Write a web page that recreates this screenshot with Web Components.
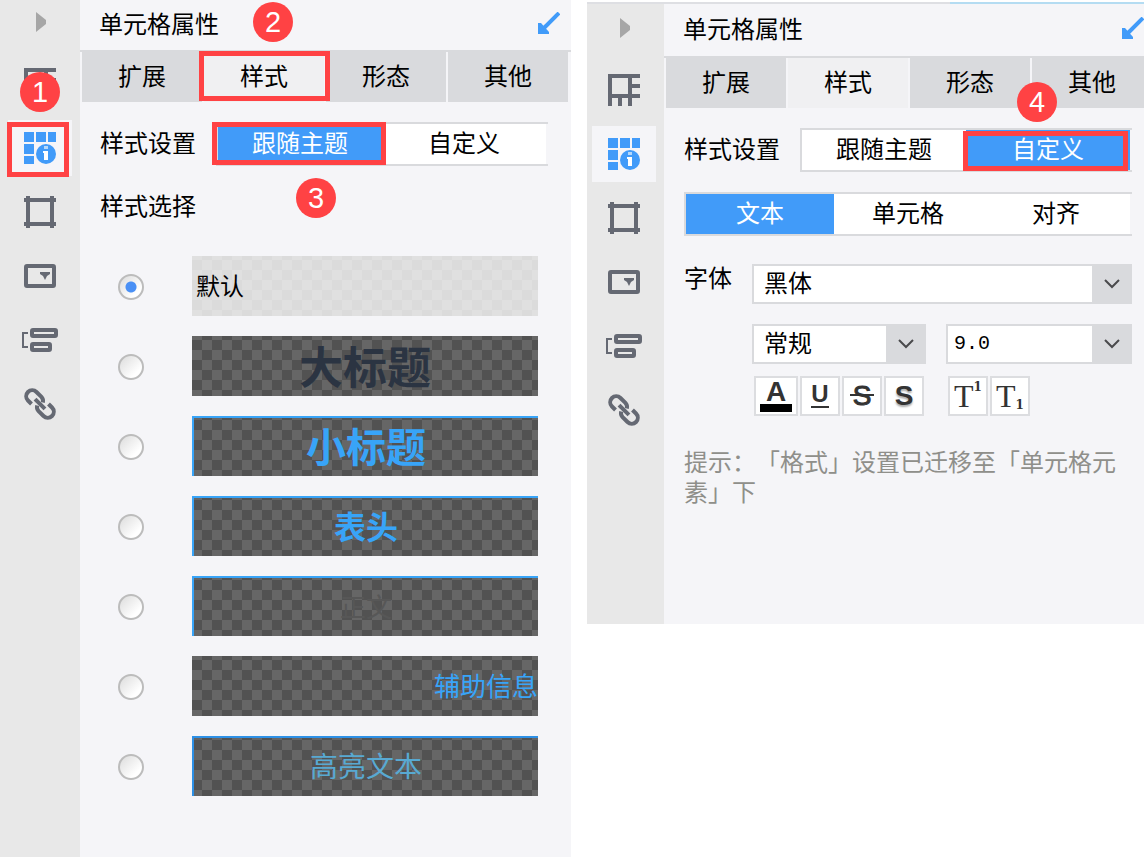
<!DOCTYPE html>
<html lang="zh-CN">
<head>
<meta charset="utf-8">
<title>单元格属性</title>
<style>
  body {
    margin: 0;
    background: #fff;
    color: #000;
    font: 24px/30px "Liberation Sans", "Noto Sans CJK SC", sans-serif;
    text-spacing-trim: space-all;
  }
  main {
    display: grid;
    grid-template-columns: 571fr 557fr;
    gap: 16px;
    align-items: start;
    overflow: hidden;
  }
  .theme {
    min-height: 100vh;
  }
  .custom {
    margin-top: 2px;
    padding-bottom: 116px;
    --rail-width: 77px;
    --rail-padding: 2px 8px 0 5px;
    --header-height: 52px;
    --arrow-margin: 0px;
    --body-padding: 20px 12px 0 20px;
    --line: 2px solid;
  }
  .stack {
    display: grid;
    gap: 20px;
  }
  .pair {
    display: grid;
    grid-template-columns: 174fr 186fr;
    gap: 20px;
  }
  .tools {
    display: flex;
    gap: 2px;
    margin-top: -8px;
    padding-left: 2px;
  }
  .tools tool-button:nth-child(5) {
    margin-left: 22px;
  }
  .font-row {
    margin-top: 8px;
  }
  .hint {
    margin: 12px 0 0;
    color: #8f8f8a;
  }
</style>
</head>
<body>
<main>
  <property-panel class="theme" heading="单元格属性">
    <setting-row label="样式设置">
      <segment-switch options="跟随主题,自定义" selected="0"></segment-switch>
    </setting-row>
    <style-list></style-list>
    <mark-frame slot="marks" style="left: 7px; top: 122px; width: 62px; height: 55px"></mark-frame>
    <mark-frame slot="marks" style="left: 199px; top: 51px; width: 131px; height: 50px"></mark-frame>
    <mark-frame slot="marks" style="left: 212px; top: 122px; width: 174px; height: 43px"></mark-frame>
    <mark-badge slot="marks" style="left: 20px; top: 72px">1</mark-badge>
    <mark-badge slot="marks" style="left: 253px; top: 2px">2</mark-badge>
    <mark-badge slot="marks" style="left: 296px; top: 178px">3</mark-badge>
  </property-panel>

  <property-panel class="custom" heading="单元格属性">
    <div class="stack">
      <setting-row label="样式设置">
        <segment-switch options="跟随主题,自定义" selected="1"></segment-switch>
      </setting-row>
      <segment-switch options="文本,单元格,对齐" selected="0"></segment-switch>
      <setting-row class="font-row" label="字体" top>
        <div class="stack">
          <combo-box label="字体" value="黑体"></combo-box>
          <div class="pair">
            <combo-box label="字形" value="常规"></combo-box>
            <combo-box class="size" label="字号" value="9.0"></combo-box>
          </div>
          <div class="tools">
            <tool-button icon="color" label="字体颜色"></tool-button>
            <tool-button icon="underline" label="下划线"></tool-button>
            <tool-button icon="strike" label="删除线"></tool-button>
            <tool-button icon="shadow" label="阴影"></tool-button>
            <tool-button icon="sup" label="上标"></tool-button>
            <tool-button icon="sub" label="下标"></tool-button>
          </div>
        </div>
      </setting-row>
      <p class="hint">提示：「格式」设置已迁移至「单元格元素」下</p>
    </div>
    <mark-frame slot="marks" style="left: 376px; top: 127px; width: 165px; height: 40px"></mark-frame>
    <mark-badge slot="marks" style="left: 430px; top: 78px">4</mark-badge>
  </property-panel>
</main>

<script>
/* ------------SIDE RAIL----------- */

const railIcons = [
  ['单元格元素', '<path d="M0 0h32v4H0zM0 0h4v32H0zM20 0h4v32h-4zM0 20h32v4H0zM24 10h8v4h-8zM10 24h4v8h-4z"/>'],
  ['单元格属性', '<path d="M0 0h10v10H0zM12 0h10v10H12zM24 0h8v10h-8zM0 12h10v10H0zM0 24h10v8H0z"/><circle cx="22" cy="22" r="10"/><path fill="#b5d8fb" d="M20 14h4v3h-4z"/><path fill="#fff" d="M19 19h5v9h-4v-7h-1z"/>'],
  ['悬浮元素', '<path d="M2 0h4v32H2zM26 0h4v32h-4zM0 2h32v4H0zM0 26h32v4H0z"/>'],
  ['控件设置', '<rect x="2" y="6" width="28" height="20" rx="1" fill="none" stroke="currentColor" stroke-width="4"/><path d="M16 12h10v2l-3 2-2 4-2-4-3-2z"/>'],
  ['条件属性', '<path d="M4 9H-1v14h5" fill="none" stroke="currentColor" stroke-width="2"/><g fill="none" stroke="currentColor" stroke-width="4"><rect x="8" y="6" width="24" height="6" rx="1"/><rect x="8" y="20" width="18" height="6" rx="1"/></g>'],
  ['超级链接', '<g fill="none" stroke="currentColor" stroke-width="4" transform="rotate(45 16 16)"><path d="M10 22H5a6 6 0 0 1 0-12h7a6 6 0 0 1 5 3"/><path d="M22 10h5a6 6 0 0 1 0 12h-7a6 6 0 0 1-5-3"/><path d="M9 16h14"/></g>']
]

customElements.define('side-rail',
  /**
   * The icon column at the left edge of a panel.
   */
  class extends HTMLElement {
    constructor () {
      super()
      this.attachShadow({ mode: 'open' }).innerHTML = `
        <style>
          :host {
            display: block;
            box-sizing: border-box;
            flex: 0 0 var(--rail-width, 80px);
            padding: var(--rail-padding, 0 8px);
            background: #e8e8e8;
          }
          nav {
            display: grid;
            gap: 8px;
          }
          button {
            display: grid;
            place-items: center;
            height: 56px;
            padding: 0;
            border: 0;
            background: none;
            color: #656973;
          }
          button.toggle {
            height: 44px;
            margin-bottom: 4px;
            padding-left: 2px;
            color: #a6a6a6;
          }
          button[aria-current] {
            background: #f5f5f8;
            color: #419bf9;
          }
          svg {
            display: block;
            overflow: visible;
            fill: currentColor;
          }
        </style>
        <nav>
          <button class="toggle" aria-label="收起"><svg width="10" height="20"><path d="M0 0l10 8v4L0 20z"/></svg></button>
          ${railIcons.map(([name, art], i) => `<button aria-label="${name}" ${i === 1 ? 'aria-current="true"' : ''}><svg width="32" height="32">${art}</svg></button>`).join('')}
        </nav>
      `
    }
  })

/* ------------TABS----------- */

customElements.define('tab-strip',
  class extends HTMLElement {
    constructor () {
      super()
      this.attachShadow({ mode: 'open' }).innerHTML = `
        <style>
          :host {
            display: flex;
            gap: 2px;
            padding: 0 3px 0 2px;
            border-top: 2px solid #d9dadd;
          }
          button {
            flex: 1 0 120px;
            height: 50px;
            padding: 0;
            border: 0;
            background: #d9dadd;
            color: inherit;
            font: inherit;
          }
          button[aria-selected=true] {
            background: #f0f0f2;
          }
        </style>
        ${['扩展', '样式', '形态', '其他'].map((t, i) => `<button role="tab" aria-selected="${i === 1}">${t}</button>`).join('')}
      `
    }
  })

/* ------------PANEL----------- */

customElements.define('property-panel',
  /**
   * Rail, heading, tabs and a slotted body. Marks lie over everything.
   */
  class extends HTMLElement {
    constructor () {
      super()
      this.attachShadow({ mode: 'open' }).innerHTML = `
        <style>
          :host {
            display: flex;
            position: relative;
            min-width: 0;
            box-sizing: border-box;
            border-top: var(--line, 0);
            border-image: linear-gradient(90deg, #dedfe3 65%, #b4dcf2 0) 2;
            background: linear-gradient(90deg, #e8e8e8 var(--rail-width, 80px), #f5f5f8 0);
          }
          section {
            flex: 1;
            min-width: 0;
            overflow: hidden;
          }
          header {
            display: flex;
            align-items: center;
            justify-content: space-between;
            height: var(--header-height, 50px);
            padding-left: 19px;
          }
          h2 {
            margin: 0;
            font: inherit;
          }
          header button {
            margin-right: var(--arrow-margin, 11px);
            margin-bottom: 4px;
            padding: 0;
            border: 0;
            background: none;
          }
          header svg {
            display: block;
          }
          .body {
            padding: var(--body-padding, 20px 23px 0 20px);
          }
        </style>
        <side-rail></side-rail>
        <section>
          <header>
            <h2></h2>
            <button aria-label="还原"><svg width="22" height="22"><path d="M21 1L5 17" stroke="#419bf9" stroke-width="4"/><path d="M0 11h3l8 9v2H0z" fill="#419bf9"/></svg></button>
          </header>
          <tab-strip role="tablist"></tab-strip>
          <div class="body"><slot></slot></div>
        </section>
        <slot name="marks"></slot>
      `
    }

    connectedCallback () {
      this.shadowRoot.querySelector('h2').textContent = this.getAttribute('heading')
    }
  })

customElements.define('setting-row',
  class extends HTMLElement {
    constructor () {
      super()
      this.attachShadow({ mode: 'open' }).innerHTML = `
        <style>
          :host {
            display: grid;
            grid-template-columns: 116px 1fr;
            align-items: center;
          }
          :host([top]) {
            grid-template-columns: 68px 1fr;
            align-items: start;
          }
        </style>
        <span></span>
        <slot></slot>
      `
    }

    connectedCallback () {
      this.shadowRoot.querySelector('span').textContent = this.getAttribute('label')
    }
  })

/* ------------SEGMENT SWITCH----------- */

customElements.define('segment-switch',
  class extends HTMLElement {
    constructor () {
      super()
      this.attachShadow({ mode: 'open' })
    }

    connectedCallback () {
      const selected = Number(this.getAttribute('selected'))
      this.shadowRoot.innerHTML = `
        <style>
          :host {
            display: flex;
            border: solid #d9dadd;
            border-width: 2px 0 2px 2px;
            padding-right: 2px;
          }
          button {
            flex: 1;
            height: 40px;
            padding: 0;
            border: 0;
            background: #fff;
            color: inherit;
            font: inherit;
          }
          button[aria-pressed=true] {
            background: #419bf9;
            color: #fff;
          }
        </style>
        ${this.getAttribute('options').split(',').map((t, i) => `<button aria-pressed="${i === selected}">${t}</button>`).join('')}
      `
    }
  })

/* ------------STYLE LIST----------- */

const cellStyles = [
  ['默认', 'plain'],
  ['大标题', 'title'],
  ['小标题', 'subtitle line'],
  ['表头', 'head line'],
  ['正文', 'text line'],
  ['辅助信息', 'aside'],
  ['高亮文本', 'accent line']
]

customElements.define('style-list',
  /**
   * Radio list of the cell styles, each shown on a transparency grid.
   */
  class extends HTMLElement {
    constructor () {
      super()
      this.attachShadow({ mode: 'open' }).innerHTML = `
        <style>
          :host {
            display: block;
            margin-top: 26px;
          }
          fieldset {
            display: grid;
            gap: 20px;
            margin: 0;
            padding: 0 10px 0 18px;
            border: 0;
          }
          legend {
            margin-left: -18px;
            padding: 0 0 34px;
          }
          label {
            display: grid;
            grid-template-columns: 26px 1fr;
            gap: 48px;
            align-items: center;
          }
          input {
            appearance: none;
            width: 26px;
            height: 26px;
            margin: 2px 0 0;
            border: 2px solid #bcbcbc;
            border-radius: 50%;
            background: linear-gradient(135deg, #dcdcdc, #fff 75%);
          }
          input:checked {
            background: radial-gradient(circle, #4a90f5 5px, transparent 6px), linear-gradient(135deg, #dcdcdc, #fff 75%);
          }
          span {
            --a: #666;
            --b: #525252;
            box-sizing: border-box;
            height: 60px;
            line-height: 62px;
            text-align: center;
            white-space: nowrap;
            overflow: hidden;
            background: conic-gradient(var(--a) 25%, var(--b) 0 50%, var(--a) 0 75%, var(--b) 0) 0 4px / 20px 20px border-box;
            color: #38a4f8;
          }
          .line {
            border: solid #38a4f8;
            border-width: 2px 0 0 2px;
            line-height: 60px;
          }
          .plain {
            --a: #e0e0e0;
            --b: #dbdbdb;
            padding-left: 4px;
            text-align: left;
            color: #000;
          }
          .title {
            font-size: 44px;
            font-weight: bold;
            line-height: 66px;
            color: #2b3442;
          }
          .subtitle {
            font-size: 40px;
            font-weight: bold;
          }
          .head {
            font-size: 32px;
            font-weight: bold;
          }
          .text {
            font-size: 26px;
            color: #575757;
          }
          .aside {
            font-size: 26px;
            text-align: right;
          }
          .accent {
            border-color: #2d90e6;
            font-size: 28px;
            color: #58a9d2;
          }
        </style>
        <fieldset>
          <legend>样式选择</legend>
          ${cellStyles.map(([name, css], i) => `<label><input type="radio" name="style" ${i ? '' : 'checked'}><span class="${css}">${name}</span></label>`).join('')}
        </fieldset>
      `
    }
  })

/* ------------COMBO BOX----------- */

customElements.define('combo-box',
  class extends HTMLElement {
    constructor () {
      super()
      this.attachShadow({ mode: 'open' })
    }

    connectedCallback () {
      this.shadowRoot.innerHTML = `
        <style>
          :host {
            display: grid;
            grid-template-columns: 1fr 40px;
            height: 40px;
            background: #d9dadd;
          }
          select {
            appearance: none;
            grid-area: 1 / 1 / 2 / 3;
            width: 100%;
            height: 40px;
            padding: 0 40px 0 10px;
            border: 2px solid #d9dadd;
            border-right: 0;
            border-radius: 0;
            background: linear-gradient(#fff, #fff) 0 0 / calc(100% - 40px) 100% no-repeat #d9dadd;
            color: inherit;
            font: inherit;
          }
          :host(.size) select {
            padding-left: 6px;
            font-family: "Liberation Mono", monospace;
            font-size: 20px;
          }
          svg {
            grid-area: 1 / 2;
            place-self: center;
            pointer-events: none;
          }
        </style>
        <select aria-label="${this.getAttribute('label')}"><option>${this.getAttribute('value')}</option></select>
        <svg width="16" height="10"><path d="M1 1l7 7 7-7" fill="none" stroke="#4a4a4c" stroke-width="2"/></svg>
      `
    }
  })

/* ------------TOOL BUTTON----------- */

const toolIcons = {
  color: '<b class="a">A</b>',
  underline: '<b class="u">U</b>',
  strike: '<b class="s">S</b>',
  shadow: '<b class="sh">S</b>',
  sup: '<span class="t">T<sup>1</sup></span>',
  sub: '<span class="t">T<sub>1</sub></span>'
}

customElements.define('tool-button',
  class extends HTMLElement {
    constructor () {
      super()
      this.attachShadow({ mode: 'open' })
    }

    connectedCallback () {
      const icon = this.getAttribute('icon')
      this.shadowRoot.innerHTML = `
        <style>
          :host {
            display: block;
          }
          button {
            display: grid;
            place-items: center;
            width: 40px;
            height: 40px;
            padding: 0;
            border: 2px solid #dcdde0;
            background: #fff;
            color: #333;
            font: 26px/26px "Liberation Sans", sans-serif;
          }
          :host([icon=color]) button {
            width: 44px;
          }
          .a {
            width: 32px;
            height: 24px;
            border-bottom: 8px solid #000;
            font-size: 28px;
            line-height: 24px;
          }
          .u {
            width: 18px;
            height: 22px;
            border-bottom: 2px solid #333;
            font-size: 24px;
            line-height: 20px;
          }
          .s {
            width: 24px;
            background: linear-gradient(#333, #333) 0 10px / 100% 2px no-repeat;
            font-size: 28px;
            font-weight: normal;
            line-height: 24px;
            -webkit-text-stroke: 1px #333;
          }
          .sh {
            font-size: 28px;
            text-shadow: 0 2px 2px #aaa;
          }
          .t {
            display: flex;
            font: 32px/30px "Liberation Serif", serif;
          }
          sup, sub {
            align-self: start;
            font: bold 12px/12px "DejaVu Serif", serif;
          }
          sub {
            align-self: end;
          }
        </style>
        <button aria-label="${this.getAttribute('label')}">${toolIcons[icon]}</button>
      `
    }
  })

/* ------------MARKS----------- */

customElements.define('mark-frame',
  class extends HTMLElement {
    constructor () {
      super()
      this.attachShadow({ mode: 'open' }).innerHTML = `
        <style>
          :host {
            position: absolute;
            box-sizing: border-box;
            border: 5px solid #ff4244;
            pointer-events: none;
          }
        </style>
      `
    }
  })

customElements.define('mark-badge',
  class extends HTMLElement {
    constructor () {
      super()
      this.attachShadow({ mode: 'open' }).innerHTML = `
        <style>
          :host {
            position: absolute;
            width: 40px;
            border-radius: 50%;
            background: #ff4244;
            color: #fff;
            font-size: 29px;
            line-height: 40px;
            text-align: center;
          }
        </style>
        <slot></slot>
      `
    }
  })
</script>
</body>
</html>
